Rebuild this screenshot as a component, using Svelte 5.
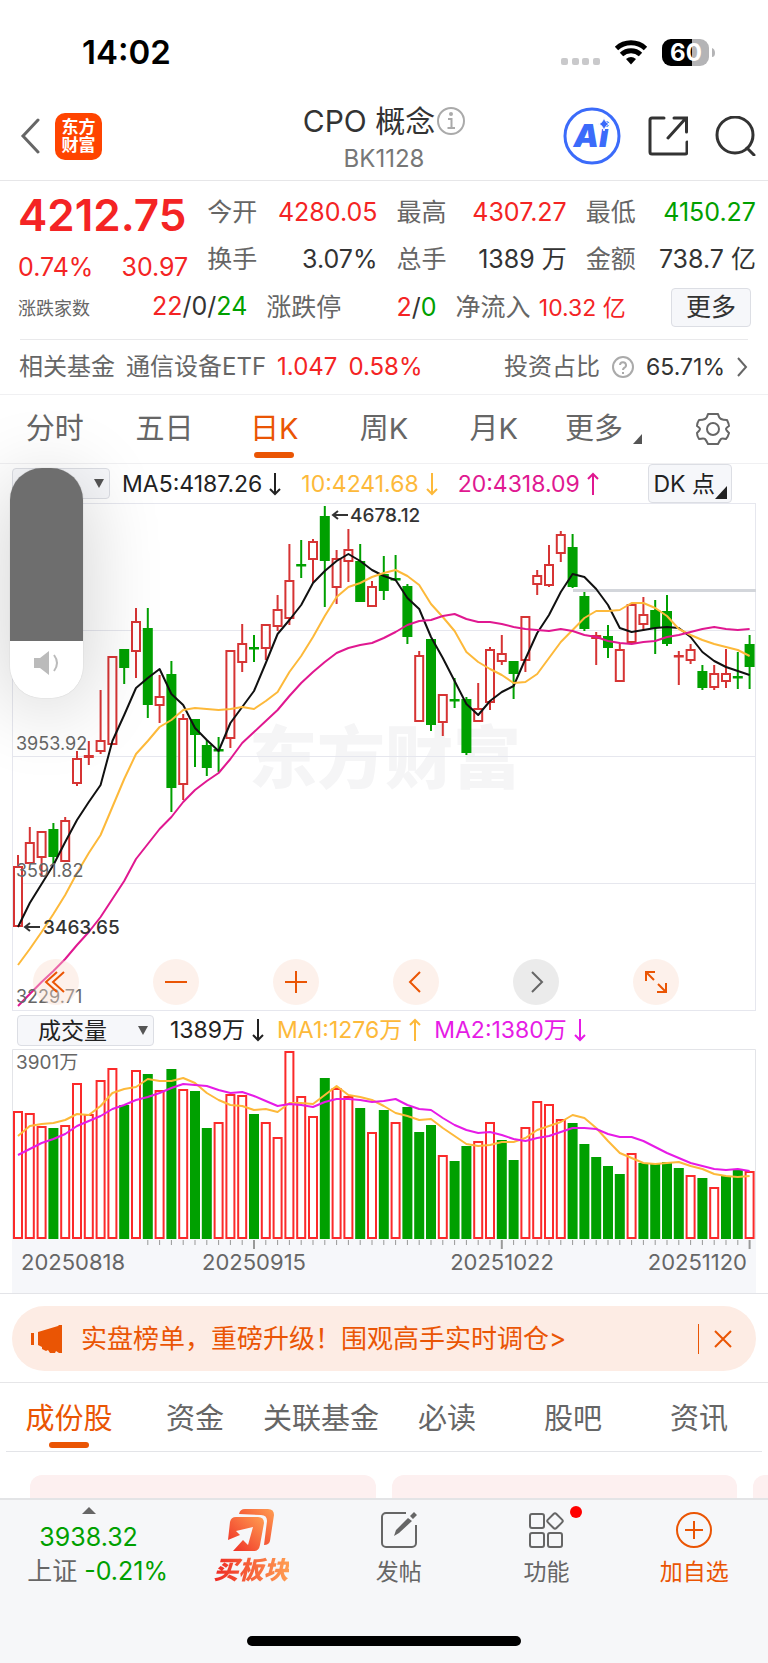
<script lang="ts">
  // [up, high, bodyTop, bodyBottom, low]
  const candles: [number, number, number, number, number][] = [
    [1, 855, 866, 927, 927], [1, 827, 842, 864, 864], [1, 831, 831, 858, 877], [0, 823, 829, 857, 864],
    [1, 817, 820, 862, 862], [1, 751, 758, 784, 786], [1, 741, 755, 758, 765], [1, 690, 740, 752, 754],
    [1, 656, 656, 745, 745], [0, 649, 649, 668, 684], [1, 608, 621, 652, 678], [0, 608, 628, 705, 718],
    [1, 675, 696, 706, 723], [0, 661, 674, 788, 812], [1, 714, 718, 785, 800], [0, 719, 719, 735, 767],
    [0, 740, 745, 768, 776], [0, 737, 749, 750, 772], [1, 650, 650, 739, 748], [1, 624, 643, 663, 672],
    [0, 635, 647, 649, 662], [1, 624, 624, 649, 660], [1, 595, 609, 627, 631], [1, 544, 580, 619, 625],
    [0, 540, 564, 566, 578], [1, 539, 541, 560, 583], [0, 506, 516, 561, 607], [1, 550, 558, 588, 604],
    [1, 529, 549, 562, 582], [0, 544, 561, 602, 602], [1, 581, 586, 607, 607], [0, 556, 574, 591, 600],
    [0, 555, 578, 579, 580], [0, 584, 586, 637, 644], [1, 651, 655, 722, 722], [0, 639, 639, 725, 731],
    [1, 694, 694, 723, 736], [0, 678, 699, 701, 708], [0, 697, 699, 753, 755], [1, 683, 708, 722, 722],
    [1, 647, 649, 703, 710], [1, 635, 653, 662, 665], [0, 661, 661, 674, 699], [1, 616, 616, 661, 672],
    [1, 570, 575, 585, 595], [1, 545, 564, 586, 587], [1, 531, 534, 554, 562], [0, 534, 547, 587, 588],
    [0, 592, 596, 629, 631], [1, 632, 635, 639, 665], [0, 625, 636, 648, 658], [1, 643, 649, 682, 682],
    [1, 604, 604, 643, 643], [1, 597, 614, 625, 631], [0, 600, 610, 628, 654], [0, 595, 611, 644, 646],
    [1, 651, 655, 657, 685], [1, 644, 649, 661, 664], [0, 665, 671, 688, 690], [1, 665, 673, 688, 690],
    [1, 649, 673, 682, 688], [0, 652, 676, 677, 689], [0, 635, 644, 667, 689]
  ];

  const ma5 = [927, 903, 884, 865, 842, 820, 802, 785, 741, 715, 688, 678, 669, 694, 705, 728, 740, 751, 723, 707, 691, 663, 634, 620, 605, 583, 571, 561, 554, 561, 570, 576, 580, 598, 609, 637, 658, 681, 704, 715, 701, 692, 686, 659, 633, 615, 592, 574, 577, 589, 605, 628, 632, 630, 628, 627, 628, 637, 652, 661, 667, 671, 675];
  const ma10 = [965, 949, 932, 914, 895, 873, 853, 835, 807, 779, 754, 741, 727, 720, 710, 708, 709, 710, 709, 707, 709, 701, 692, 672, 656, 637, 616, 597, 587, 583, 577, 573, 570, 576, 585, 604, 617, 631, 652, 662, 669, 675, 683, 682, 674, 658, 642, 630, 618, 611, 611, 610, 603, 603, 608, 616, 629, 635, 640, 644, 647, 650, 656];
  const ma20 = [1006, 994, 982, 971, 959, 945, 932, 917, 899, 881, 859, 844, 829, 817, 802, 790, 781, 773, 759, 743, 732, 721, 710, 696, 683, 672, 662, 653, 648, 645, 643, 638, 632, 625, 621, 620, 616, 614, 619, 622, 622, 624, 627, 629, 630, 631, 629, 631, 635, 637, 641, 643, 644, 642, 641, 637, 635, 632, 629, 627, 629, 630, 629];

  const volTops = [1111, 1113, 1126, 1128, 1125, 1083, 1114, 1080, 1068, 1105, 1070, 1074, 1090, 1069, 1089, 1091, 1128, 1122, 1094, 1095, 1114, 1122, 1137, 1051, 1096, 1116, 1078, 1088, 1096, 1108, 1132, 1110, 1122, 1107, 1132, 1125, 1155, 1161, 1146, 1141, 1122, 1140, 1160, 1127, 1101, 1104, 1119, 1123, 1144, 1157, 1166, 1174, 1153, 1163, 1163, 1162, 1168, 1175, 1178, 1187, 1176, 1170, 1171];
  const volDown = [3, 9, 11, 13, 15, 16, 20, 26, 29, 31, 33, 34, 35, 37, 38, 41, 42, 47, 48, 49, 50, 51, 53, 54, 55, 56, 58, 60, 61];
  const volMa1 = [1136, 1126, 1124, 1123, 1120, 1114, 1115, 1106, 1093, 1089, 1087, 1079, 1081, 1081, 1078, 1083, 1093, 1100, 1105, 1106, 1110, 1109, 1112, 1103, 1103, 1104, 1095, 1086, 1095, 1097, 1100, 1106, 1113, 1116, 1120, 1119, 1128, 1136, 1144, 1146, 1145, 1142, 1142, 1138, 1130, 1126, 1122, 1115, 1118, 1128, 1141, 1153, 1158, 1163, 1164, 1163, 1162, 1166, 1169, 1174, 1176, 1177, 1176];
  const volMa2 = [1155, 1149, 1143, 1139, 1134, 1126, 1121, 1116, 1109, 1105, 1100, 1097, 1093, 1088, 1084, 1085, 1086, 1090, 1093, 1092, 1096, 1101, 1106, 1104, 1105, 1107, 1102, 1099, 1099, 1100, 1102, 1101, 1099, 1105, 1109, 1110, 1118, 1125, 1130, 1133, 1132, 1135, 1139, 1141, 1138, 1136, 1132, 1128, 1128, 1129, 1134, 1137, 1137, 1141, 1147, 1153, 1158, 1163, 1166, 1169, 1170, 1169, 1171];

  const step = 11.8;
  const cx = (i: number) => 18 + i * step;
  const line = (ys: number[]) => ys.map((y, i) => `${cx(i).toFixed(1)},${y}`).join(' ');

  const periods = ['分时', '五日', '日K', '周K', '月K'];
  const sections = ['成份股', '资金', '关联基金', '必读', '股吧', '资讯'];
  let period = $state('日K');
  let section = $state('成份股');
</script>

{#snippet arrow(down: boolean)}
  <svg class="arrow" viewBox="0 0 12 24" aria-hidden="true">
    <path d={down ? 'M6 1V22M1 17l5 5 5-5' : 'M6 23V2M1 7l5-5 5 5'} />
  </svg>
{/snippet}

<div class="page">
  <div class="status">
    <span class="time">14:02</span>
    <svg class="signals" viewBox="0 0 158 30" aria-hidden="true">
      <g fill="#c9c9cb">
        <rect x="3" y="21" width="7" height="7" rx="2" />
        <rect x="14" y="21" width="7" height="7" rx="2" />
        <rect x="24" y="21" width="7" height="7" rx="2" />
        <rect x="35" y="21" width="7" height="7" rx="2" />
      </g>
      <g fill="none" stroke="#000" stroke-width="5">
        <path d="M58.500 11.500a21.500 21.500 0 0 1 29 0" />
        <path d="M63.500 17.500a14 14 0 0 1 19 0" />
      </g>
      <path d="M73 27.500l-5-5.500a8 8 0 0 1 10 0z" />
      <path d="M112 2h30a9 9 0 0 1 9 9v9a9 9 0 0 1-9 9h-30z" fill="#b4b4b6" />
      <path d="M134 2h-21a9 9 0 0 0-9 9v9a9 9 0 0 0 9 9h21z" />
      <path d="M154 11q3 1 3 5t-3 4z" fill="#b4b4b6" />
      <text x="128" y="24" text-anchor="middle" class="battery">60</text>
    </svg>
  </div>

  <header class="header">
    <div class="left">
      <button class="bare" aria-label="返回">
        <svg width="20" height="36" viewBox="0 0 20 36"><path d="M18 2L3 18l15 16" fill="none" stroke="#666" stroke-width="3" stroke-linecap="round" /></svg>
      </button>
      <a class="logo" href="#home">东方<br />财富</a>
    </div>
    <div class="title">
      <h1>CPO 概念
        <svg width="28" height="28" viewBox="0 0 28 28" aria-hidden="true">
          <g fill="none" stroke="#aaa" stroke-width="2"><circle cx="14" cy="14" r="13" /><path d="M11 12h3.500v9M10.500 21h7.500" /></g>
          <circle cx="14" cy="7" r="2" fill="#aaa" />
        </svg>
      </h1>
      <p>BK1128</p>
    </div>
    <div class="tools">
      <button class="bare" aria-label="AI">
        <svg width="58" height="58" viewBox="0 0 58 58">
          <circle cx="29" cy="29" r="27" fill="#fff" stroke="#3b6bfa" stroke-width="3" />
          <text x="28" y="40" text-anchor="middle" class="ai">Ai</text>
          <path d="M41 10q1 6 6 7-5 1-6 7-1-6-6-7 5-1 6-7z" fill="#3b6bfa" stroke="#fff" stroke-width="1" />
        </svg>
      </button>
      <button class="bare" aria-label="分享">
        <svg width="40" height="40" viewBox="0 0 40 40" fill="none" stroke="#333" stroke-width="3" stroke-linecap="round">
          <path d="M16 2H4a2 2 0 0 0-2 2v32a2 2 0 0 0 2 2h33a2 2 0 0 0 2-2V26M26 2h12.500v14M38 2L20 22" />
        </svg>
      </button>
      <button class="bare" aria-label="搜索">
        <svg width="42" height="40" viewBox="0 0 42 40" fill="none" stroke="#333" stroke-width="3" stroke-linecap="round">
          <circle cx="20" cy="19" r="18" /><path d="M32 32l7 7" />
        </svg>
      </button>
    </div>
  </header>

  <section class="quote">
    <div class="last">
      <strong>4212.75</strong>
      <div><span>0.74%</span><span>30.97</span></div>
    </div>
    <div class="pair"><span>今开</span><b class="up">4280.05</b></div>
    <div class="pair"><span>最高</span><b class="up">4307.27</b></div>
    <div class="pair"><span>最低</span><b class="down">4150.27</b></div>
    <div class="pair"><span>换手</span><b>3.07%</b></div>
    <div class="pair"><span>总手</span><b>1389 万</b></div>
    <div class="pair"><span>金额</span><b>738.7 亿</b></div>
    <div class="counts">
      <div class="pair wide"><small>涨跌家数</small><b><i class="up">22</i>/0/<i class="down">24</i></b></div>
      <div class="pair"><span>涨跌停</span><b><i class="up">2</i>/<i class="down">0</i></b></div>
      <div class="pair"><span>净流入</span><b class="up inflow">10.32 亿</b></div>
      <button class="more">更多</button>
    </div>
  </section>

  <a class="fund" href="#fund">
    <span>相关基金</span>
    <span>通信设备ETF</span>
    <b class="up">1.047</b>
    <b class="up">0.58%</b>
    <span class="ratio">投资占比</span>
    <svg width="24" height="24" viewBox="0 0 24 24" fill="none" stroke="#aaa" stroke-width="2" aria-hidden="true">
      <circle cx="12" cy="12" r="10" /><path d="M9 10a3 3 0 1 1 4 3q-1 1-1 2M12 17v2" />
    </svg>
    <b class="share">65.71%</b>
    <svg width="12" height="22" viewBox="0 0 12 22" aria-hidden="true"><path d="M2 2l8 9-8 9" fill="none" stroke="#666" stroke-width="2" /></svg>
  </a>

  <nav class="periods">
    {#each periods as name}
      <button class="tab" class:active={period === name} onclick={() => (period = name)}>{name}</button>
    {/each}
    <button class="tab more-tab">更多<svg width="9" height="10" viewBox="0 0 9 10"><path d="M9 0v10H0z" fill="#555" /></svg></button>
    <button class="tab" aria-label="设置">
      <svg width="34" height="34" viewBox="0 0 34 34" fill="none" stroke="#666" stroke-width="2" stroke-linejoin="round">
        <path d="M12 2h10q1 4 3 5t6 1q2 4 2 6-3 2-3 3t3 4q-1 4-3 6-4-1-5 0t-3 5H12q-2-4-3-5t-6 0q-2-3-2-6 3-3 3-4t-3-3q0-3 2-6 4 0 6-1t3-5z" />
        <circle cx="17" cy="17" r="6" />
      </svg>
    </button>
  </nav>

  <section class="chart">
    <div class="legend">
      <div class="picker first">
        <select aria-label="主图指标"><option>均线</option></select>
      </div>
      <span>MA5:4187.26{@render arrow(true)}</span>
      <span class="gold">10:4241.68{@render arrow(true)}</span>
      <span class="pink">20:4318.09{@render arrow(false)}</span>
      <button class="dk">DK 点<svg width="12" height="13" viewBox="0 0 12 13"><path d="M12 0v13H0z" fill="#222" /></svg></button>
    </div>

    <div class="plot">
      <svg viewBox="12 503 744 508" role="img" aria-label="日K线">
        <text x="385" y="783" text-anchor="middle" class="watermark">东方财富</text>
        <g class="grid">
          <path d="M12 630.500H756M12 756.500H756M12 883.500H756" />
          <rect x="12.500" y="503.500" width="743" height="507" />
        </g>
        <path d="M573 590.500H756" stroke="#d3d6db" stroke-width="3" />
        {#each candles as [up, high, top, bottom, low], i}
          <g class={up ? 'rise' : 'fall'}>
            <path d="M{cx(i)} {high}V{top}M{cx(i)} {bottom}V{low}" />
            <rect x={cx(i) - 4} y={top + 1} width="8" height={Math.max(bottom - top - 2, 0.5)} />
          </g>
        {/each}
        <polyline points={line(ma5)} stroke="#111" />
        <polyline points={line(ma10)} stroke="#fdb93a" />
        <polyline points={line(ma20)} stroke="#e01890" />
        <g class="scale">
          <text x="16" y="522">4678.12</text>
          <text x="16" y="623">4316.02</text>
          <text x="16" y="750">3953.92</text>
          <text x="16" y="877">3591.82</text>
          <text x="16" y="1003">3229.71</text>
        </g>
        <g class="mark">
          <path d="M348 515H333M338 511l-5 4 5 4M40 927H25M30 923l-5 4 5 4" />
          <text x="350" y="522">4678.12</text>
          <text x="43" y="934">3463.65</text>
        </g>
      </svg>

      <div class="controls">
        <button aria-label="最左"><svg viewBox="0 0 46 46"><path d="M24 13L13 23l11 10M31 13L20 23l11 10" /></svg></button>
        <button aria-label="缩小"><svg viewBox="0 0 46 46"><path d="M12 23h22" /></svg></button>
        <button aria-label="放大"><svg viewBox="0 0 46 46"><path d="M12 23h22M23 12v22" /></svg></button>
        <button aria-label="左移"><svg viewBox="0 0 46 46"><path d="M27 13L17 23l10 10" /></svg></button>
        <button aria-label="右移" class="off"><svg viewBox="0 0 46 46"><path d="M19 13l10 10-10 10" /></svg></button>
        <button aria-label="全屏"><svg viewBox="0 0 46 46"><path d="M13 22v-9h9M13 13l8 8M33 24v9h-9M33 33l-8-8" /></svg></button>
      </div>
    </div>

    <div class="legend volume">
      <div class="picker">
        <select aria-label="副图指标"><option>成交量</option></select>
      </div>
      <span>1389万{@render arrow(true)}</span>
      <span class="gold">MA1:1276万{@render arrow(false)}</span>
      <span class="violet">MA2:1380万{@render arrow(true)}</span>
    </div>

    <svg viewBox="12 1049 744 244" role="img" aria-label="成交量">
      <rect x="12" y="1239" width="744" height="54" fill="#f6f7fa" />
      <path d="M12.500 1239V1049.500H755.500V1239" fill="none" stroke="#e3e4e8" />
      <text x="16" y="1069" class="vol-max">3901万</text>
      {#each volTops as top, i}
        {@const fall = volDown.includes(i)}
        <rect class={fall ? 'vol-fall' : 'vol-rise'} x={cx(i) - 4} y={top + 1} width="8" height={1237 - top} />
        {#if i > 10}
          <path d="M{cx(i)} 1240V{(i + 1) % 21 ? 1245 : 1249}" stroke="#999" stroke-width={(i + 1) % 21 ? 1 : 2} />
        {/if}
      {/each}
      <polyline points={line(volMa1)} stroke="#fdb93a" />
      <polyline points={line(volMa2)} stroke="#e61be6" />
      <g class="dates">
        <text x="21" y="1270">20250818</text>
        <text x="254" y="1270" text-anchor="middle">20250915</text>
        <text x="502" y="1270" text-anchor="middle">20251022</text>
        <text x="747" y="1270" text-anchor="end">20251120</text>
      </g>
    </svg>

    <div class="hud">
      <svg width="28" height="26" viewBox="0 0 28 26" aria-hidden="true">
        <path d="M1 8h6l9-7v24l-9-7H1z" fill="#bbb" />
        <path d="M21 5q6 8 0 16" fill="none" stroke="#bbb" stroke-width="2" />
      </svg>
    </div>
  </section>

  <div class="notice-wrap">
    <div class="notice">
      <svg width="32" height="28" viewBox="0 0 32 28" fill="#ea5504" aria-hidden="true">
        <path d="M0 8h3v12H0zM7 7l20-6 1-1h3v28h-3l-3-2-1 2h-5l-2-3-2 1-4-2v-2l-4-2z" />
      </svg>
      <a href="#rank">实盘榜单，重磅升级！围观高手实时调仓&gt;</a>
      <button class="bare" aria-label="关闭">
        <svg width="18" height="18" viewBox="0 0 18 18"><path d="M1 1l16 16M17 1L1 17" stroke="#ea5504" stroke-width="2" /></svg>
      </button>
    </div>
  </div>

  <nav class="sections">
    {#each sections as name}
      <button class="tab" class:active={section === name} onclick={() => (section = name)}>{name}</button>
    {/each}
  </nav>
  <div class="cards"><div></div><div></div><div></div></div>

  <footer class="footer">
    <nav class="actions">
      <a class="index" href="#sh">
        <svg width="14" height="7" viewBox="0 0 14 7"><path d="M7 0l7 7H0z" fill="#666" /></svg>
        <b class="down">3938.32</b>
        <span>上证 <b class="down">-0.21%</b></span>
      </a>
      <a class="buy" href="#buy">
        <svg width="48" height="44" viewBox="0 0 48 44" aria-hidden="true">
          <defs>
            <linearGradient id="flame" x1="0" y1="1" x2="1" y2="0"><stop offset="0" stop-color="#ee2a24" /><stop offset="1" stop-color="#ff9e52" /></linearGradient>
          </defs>
          <path d="M12 6q1-5 6-5h23q6 0 6 6l-4 26q-1 4-6 4l3-24q0-6-6-6z" fill="url(#flame)" />
          <path d="M3 14q1-5 6-5h22q6 0 6 6l-4 22q-1 6-6 6H6l10-11 5 5 5-18-17 4 4 4L1 32z" fill="url(#flame)" />
        </svg>
        <em>买板块</em>
      </a>
      <a href="#post">
        <svg width="38" height="38" viewBox="0 0 38 38" fill="none" stroke="#666" stroke-width="2" aria-hidden="true">
          <path d="M26 2H6a4 4 0 0 0-4 4v26a4 4 0 0 0 4 4h26a4 4 0 0 0 4-4V14" />
          <path d="M14 25l2-6L28 7l4 3-13 12zM30 5l4-4 3 3-4 4z" fill="#666" stroke="none" />
        </svg>
        发帖
      </a>
      <a href="#tools">
        <svg width="36" height="38" viewBox="0 0 36 38" fill="none" stroke="#666" stroke-width="2" aria-hidden="true">
          <rect x="2" y="3" width="14" height="14" rx="2" /><rect x="2" y="22" width="14" height="14" rx="2" /><rect x="20" y="22" width="14" height="14" rx="2" />
          <rect x="21" y="4" width="12" height="12" rx="2" transform="rotate(45 27 10)" />
        </svg>
        功能
        <span class="dot"></span>
      </a>
      <a class="add" href="#add">
        <svg width="38" height="38" viewBox="0 0 38 38" fill="none" stroke="#ea5504" stroke-width="2" aria-hidden="true">
          <circle cx="19" cy="19" r="17" /><path d="M10 19h18M19 10v18" />
        </svg>
        加自选
      </a>
    </nav>
    <div class="home"></div>
  </footer>
</div>

<style>
  :global(body) {
    margin: 0;
    background: #fff;
  }
  .page {
    font-family: Inter, 'Noto Sans CJK SC', sans-serif;
    font-size: 24px;
    line-height: 30px;
    color: #333;
    overflow: hidden;
  }
  button,
  select {
    font: inherit;
    color: inherit;
    margin: 0;
  }
  a {
    color: inherit;
    text-decoration: none;
  }
  b,
  i {
    font-weight: 400;
    font-style: normal;
  }
  svg {
    display: block;
    flex-shrink: 0;
  }
  .bare {
    border: 0;
    padding: 0;
    background: none;
  }
  .up {
    color: #f42424;
  }
  .down {
    color: #00a000;
  }

  .status {
    display: flex;
    justify-content: space-between;
    align-items: center;
    height: 92px;
    padding: 12px 52px 0 82px;
    box-sizing: border-box;
  }
  .time {
    font-size: 33px;
    font-weight: 600;
    color: #000;
  }
  .signals {
    width: 158px;
  }
  .battery {
    font-size: 24px;
    font-weight: 700;
    fill: #fff;
  }

  .header {
    display: grid;
    grid-template-columns: 1fr auto 1fr;
    align-items: center;
    height: 88px;
    padding: 0 11px;
    border-bottom: 1px solid #e6e6e8;
  }
  .left,
  .tools {
    display: flex;
    align-items: center;
    gap: 15px;
  }
  .left {
    padding-left: 9px;
  }
  .tools {
    justify-content: flex-end;
    gap: 27px;
  }
  .logo {
    width: 47px;
    height: 47px;
    padding-top: 5px;
    box-sizing: border-box;
    border-radius: 10px;
    background: #ff4400;
    color: #fff;
    font-size: 17px;
    font-weight: 700;
    line-height: 18px;
    text-align: center;
  }
  h1 {
    display: flex;
    align-items: center;
    gap: 2px;
    margin: 0;
    font-size: 30px;
    line-height: 40px;
    font-weight: 400;
  }
  .title p {
    margin: 3px 0 0;
    font-size: 24px;
    color: #777;
    text-align: center;
  }
  .title {
    padding-top: 2px;
  }
  .ai {
    font-size: 32px;
    font-weight: 900;
    font-style: italic;
    fill: #3b6bfa;
  }

  .quote {
    display: grid;
    grid-template-columns: repeat(4, 1fr);
    grid-template-rows: 47px 47px 47px;
    column-gap: 19px;
    margin: 0 12px 0 18px;
    padding: 8px 0 9px;
    font-size: 25px;
  }
  .last {
    grid-row: span 2;
    color: #f42424;
  }
  .last strong {
    display: block;
    font-size: 44px;
    line-height: 52px;
    font-weight: 600;
  }
  .last div {
    display: flex;
    justify-content: space-between;
    padding-top: 8px;
    line-height: 36px;
  }
  .pair {
    display: flex;
    justify-content: space-between;
    align-items: baseline;
    line-height: 47px;
    white-space: nowrap;
  }
  .pair span {
    color: #666;
  }
  small {
    font-size: 18px;
    color: #666;
  }
  .counts {
    grid-column: span 4;
    display: grid;
    grid-template-columns: 229fr 170fr 170fr 111fr;
    column-gap: 19px;
    align-items: center;
  }
  .inflow {
    font-size: 23px;
  }
  .more {
    justify-self: end;
    width: 80px;
    margin-right: 5px;
    padding: 0;
    line-height: 37px;
    border: 1px solid #dcdee4;
    border-radius: 4px;
    background: #f6f7fa;
  }

  .fund {
    display: flex;
    align-items: center;
    gap: 11px;
    height: 55px;
    padding: 0 20px 0 19px;
    color: #333;
    font-size: 24px;
    background: linear-gradient(#e9e9eb, #e9e9eb) center top / calc(100% - 40px) 1px no-repeat;
    border-bottom: 1px solid #f0f0f2;
    white-space: nowrap;
  }
  .fund span {
    color: #666;
  }
  .fund .ratio {
    margin-left: auto;
  }
  .share {
    font-size: 23px;
  }

  .tab {
    position: relative;
    display: flex;
    align-items: center;
    justify-content: center;
    height: 100%;
    padding: 0;
    border: 0;
    background: none;
    color: #666;
    font-size: 29px;
    white-space: nowrap;
  }
  .active {
    color: #ea5504;
  }
  .active::after {
    content: '';
    position: absolute;
    bottom: 5px;
    left: calc(50% - 20px);
    width: 40px;
    height: 6px;
    border-radius: 3px;
    background: #ea5504;
  }
  .periods {
    display: grid;
    grid-template-columns: repeat(7, 1fr);
    height: 68px;
    border-bottom: 1px solid #f0f0f2;
  }
  .more-tab {
    gap: 10px;
  }
  .more-tab svg {
    margin-top: 20px;
  }

  .chart {
    position: relative;
    padding: 0 12px;
    border-bottom: 1px solid #e3e4e8;
  }
  .legend {
    display: flex;
    align-items: center;
    gap: 20px;
    height: 39px;
    font-size: 23px;
    color: #222;
    white-space: nowrap;
  }
  .legend span {
    display: flex;
    align-items: center;
    gap: 7px;
  }
  .arrow {
    width: 12px;
    fill: none;
    stroke: currentColor;
    stroke-width: 2;
  }
  .legend .gold {
    color: #fdb93a;
  }
  .legend .pink {
    color: #e01890;
  }
  .legend .violet {
    color: #e61be6;
  }
  .picker {
    position: relative;
    width: 137px;
  }
  .picker.first {
    width: 98px;
    margin-right: -8px;
  }
  .picker::after {
    content: '';
    position: absolute;
    right: 6px;
    top: 11px;
    border: 5px solid transparent;
    border-top: 9px solid #555;
    border-bottom: 0;
  }
  select {
    appearance: none;
    display: block;
    width: 100%;
    height: 31px;
    padding: 0 20px;
    border: 1px solid #dcdee4;
    border-radius: 4px;
    background: #f6f7fa;
  }
  .first select {
    padding: 0 10px;
  }
  .dk {
    display: flex;
    align-items: center;
    margin: 0 24px 0 auto;
    height: 39px;
    padding: 0 4px;
    border: 1px solid #dcdee4;
    border-radius: 4px;
    background: #f6f7fa;
  }
  .dk svg {
    margin-top: 18px;
  }
  .volume {
    height: 38px;
    gap: 13px;
    padding-left: 5px;
  }
  .volume .picker {
    margin-right: 3px;
  }
  .plot {
    position: relative;
  }
  .watermark {
    font-size: 68px;
    font-weight: 900;
    fill: #f5f5f6;
  }
  .grid {
    fill: none;
    stroke: #e6e7ee;
  }
  .rise {
    stroke: #d63434;
    stroke-width: 2;
    fill: #fff;
  }
  .fall {
    stroke: #00a000;
    stroke-width: 2;
    fill: #00a000;
  }
  .vol-rise {
    stroke: #fb2a2a;
    stroke-width: 2;
    fill: #fff;
  }
  .vol-fall {
    stroke: #00a000;
    stroke-width: 2;
    fill: #00a000;
  }
  polyline {
    fill: none;
    stroke-width: 2;
    stroke-linejoin: round;
  }
  .scale {
    font-size: 18px;
    fill: #666;
  }
  .mark {
    font-size: 19px;
    font-weight: 500;
    fill: #333;
  }
  .mark path {
    fill: none;
    stroke: #333;
    stroke-width: 2;
  }
  .vol-max {
    font-size: 19px;
    fill: #666;
  }
  .dates {
    font-size: 22px;
    fill: #666;
  }
  .controls {
    position: absolute;
    left: 21px;
    right: 77px;
    bottom: 6px;
    display: flex;
    justify-content: space-between;
  }
  .controls button {
    width: 46px;
    height: 46px;
    padding: 0;
    border: 0;
    border-radius: 50%;
    background: rgba(250, 220, 205, 0.4);
  }
  .controls path {
    fill: none;
    stroke: #ea5504;
    stroke-width: 2;
  }
  .controls .off {
    background: #ebebeb;
  }
  .controls .off path {
    stroke: #666;
  }
  .hud {
    position: absolute;
    left: 10px;
    top: 4px;
    width: 73px;
    height: 230px;
    padding: 182px 0 0 23px;
    box-sizing: border-box;
    border-radius: 32px;
    background: linear-gradient(#6e6e6e 173px, #fff 173px);
    box-shadow: 0 10px 80px rgba(0, 0, 0, 0.2), 0 0 1px rgba(0, 0, 0, 0.3);
  }

  .notice-wrap {
    padding: 12px 12px 11px;
    border-bottom: 1px solid #e6e6e8;
  }
  .notice {
    display: flex;
    align-items: center;
    gap: 18px;
    height: 65px;
    padding: 0 24px 0 19px;
    border-radius: 33px;
    background: #fdece4;
    color: #ea5504;
    font-size: 26px;
    white-space: nowrap;
  }
  .notice button {
    margin-left: auto;
    padding: 6px 0 6px 15px;
    border-left: 1px solid #ea5504;
  }

  .sections {
    display: grid;
    grid-template-columns: repeat(6, 1fr);
    height: 68px;
    margin: 0 6px;
    border-bottom: 1px solid #e3e4e8;
  }
  .sections .active::after {
    bottom: 3px;
  }
  .sections .tab {
    padding-top: 4px;
  }
  .cards {
    display: flex;
    gap: 16px;
    padding: 23px 0 0 30px;
    overflow: hidden;
  }
  .cards div {
    flex: 0 0 45vw;
    height: 23px;
    border-radius: 12px 12px 0 0;
    background: #fdf0f0;
  }

  .footer {
    border-top: 2px solid #e3e4e6;
    background: #f6f7f9;
    padding-bottom: 17px;
  }
  .actions {
    display: grid;
    grid-template-columns: 6fr 5fr 5fr 5fr 5fr;
    height: 136px;
    color: #666;
    font-size: 23px;
    white-space: nowrap;
  }
  .actions a {
    position: relative;
    display: flex;
    flex-direction: column;
    align-items: center;
    gap: 8px;
    padding-top: 11px;
  }
  .actions .index {
    gap: 4px;
    padding: 7px 0 0 18px;
    font-size: 25px;
  }
  .index > svg,
  .index > b {
    margin-right: 18px;
  }
  .index > b {
    padding-top: 4px;
  }
  .actions .buy {
    gap: 3px;
    padding-top: 8px;
  }
  .buy em {
    font-size: 25px;
    font-weight: 900;
    background: linear-gradient(90deg, #ee2a24, #ff9e52);
    background-clip: text;
    color: transparent;
  }
  .actions .add {
    color: #ea5504;
  }
  .dot {
    position: absolute;
    top: 6px;
    left: calc(50% + 24px);
    width: 12px;
    height: 12px;
    border-radius: 50%;
    background: #f00;
  }
  .home {
    width: 274px;
    height: 10px;
    margin: 0 auto;
    border-radius: 5px;
    background: #000;
  }
</style>
